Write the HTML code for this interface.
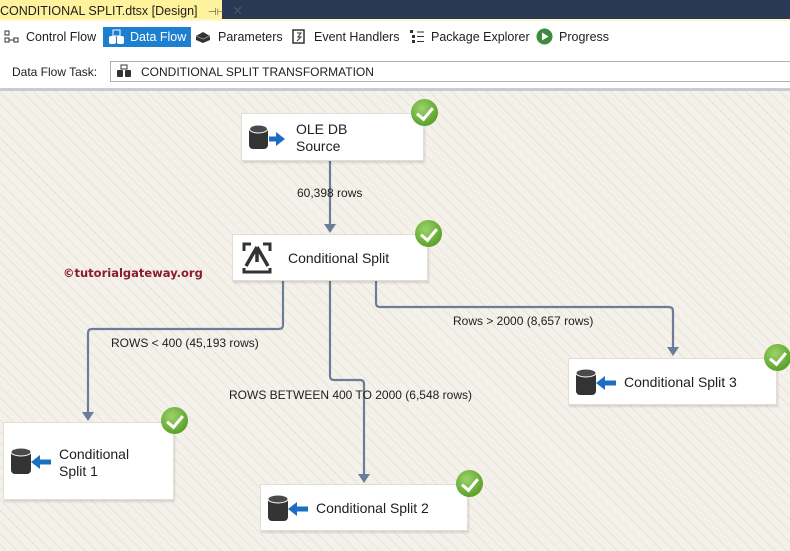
<!DOCTYPE html>
<html><head><meta charset="utf-8">
<style>
*{margin:0;padding:0;box-sizing:border-box}
body{width:790px;height:551px;overflow:hidden;position:relative;font-family:"Liberation Sans",sans-serif;background:#fff}
.tabbar{position:absolute;left:0;top:0;width:790px;height:20px;background:#293955}
.tab{position:absolute;left:0;top:0;width:222px;height:20px;background:#fff29d;font-size:12.5px;color:#1e1e1e;padding:3px 0 0 0;white-space:nowrap}
.tabline{position:absolute;left:0;top:19px;width:790px;height:2px;background:#fff7c4}
.tb{position:absolute;top:30px;font-size:12.5px;color:#1e1e1e;white-space:nowrap}
.sel{position:absolute;left:103px;top:27px;width:88px;height:20px;background:#1c7fd0}
.lbl{position:absolute;left:12px;top:65px;font-size:12px;color:#1e1e1e}
.inp{position:absolute;left:110px;top:61px;width:690px;height:21px;border:1px solid #b0b0b0;background:#fff;font-size:12px;color:#1e1e1e;padding:3px 0 0 30px}
.sep{position:absolute;left:0;top:88px;width:790px;height:3px;background:#c8cbd2}
.canvas{position:absolute;left:0;top:91px;width:790px;height:460px;background:#f3f0e8;
background-image:repeating-linear-gradient(45deg,#f4f1ea 0 4px,#e9e4d8 4px 5px,#f4f1ea 5px 8px)}
.node{position:absolute;background:#fff;border:1px solid #e2ded6;box-shadow:1px 2px 2px rgba(0,0,0,.12);font-size:14px;color:#1e1e1e}
.node .t{position:absolute;line-height:17px}
.chk{position:absolute;width:27px;height:27px;border-radius:50%;background:radial-gradient(circle at 40% 35%,#9dd36a,#5da32d 70%,#4b8c22);}
.chk:after{content:"";position:absolute;left:9px;top:5px;width:7px;height:13px;border:solid #fff;border-width:0 3px 3px 0;transform:rotate(40deg)}
.el{position:absolute;font-size:12px;color:#1e1e1e;white-space:nowrap}
</style></head><body>
<div class="tabbar"></div>
<div class="tab">CONDITIONAL SPLIT.dtsx [Design] &nbsp;&nbsp;<span style="color:#555;font-size:10px">⊣⊢</span>&nbsp;&nbsp;<span style="color:#555">✕</span></div>
<div class="tabline"></div>
<div class="sel"></div>
<svg style="position:absolute;left:4px;top:30px" width="16" height="14"><rect x="1" y="1" width="4" height="4" fill="none" stroke="#333"/><rect x="1" y="8" width="4" height="4" fill="none" stroke="#333"/><rect x="10" y="8" width="4" height="4" fill="none" stroke="#333"/><path d="M5 10h5" stroke="#333"/></svg>
<div class="tb" style="left:26px">Control Flow</div>
<svg style="position:absolute;left:108px;top:29px" width="18" height="16"><rect x="1" y="7" width="7" height="8" rx="2" fill="#fff"/><rect x="9" y="7" width="7" height="8" rx="2" fill="#fff"/><rect x="5" y="1" width="7" height="6" fill="none" stroke="#fff"/></svg>
<div class="tb" style="left:130px;color:#fff">Data Flow</div>
<svg style="position:absolute;left:195px;top:30px" width="16" height="14"><path d="M1 6 L8 2 L15 6 L15 10 L8 13 L1 10Z" fill="#333"/><path d="M1 6 L8 9 L15 6" stroke="#888" fill="none"/></svg>
<div class="tb" style="left:218px">Parameters</div>
<svg style="position:absolute;left:292px;top:29px" width="14" height="15"><rect x="1" y="1" width="11" height="13" fill="none" stroke="#333" stroke-width="1.5"/><path d="M5 4h4l-3 4h3l-4 4" stroke="#333" fill="none"/></svg>
<div class="tb" style="left:314px">Event Handlers</div>
<svg style="position:absolute;left:409px;top:29px" width="16" height="15"><rect x="1" y="1" width="3" height="3" fill="#333"/><rect x="3" y="6" width="3" height="3" fill="#333"/><rect x="3" y="11" width="3" height="3" fill="#333"/><path d="M8 3h7M8 7.5h7M8 12.5h7" stroke="#333"/></svg>
<div class="tb" style="left:431px">Package Explorer</div>
<svg style="position:absolute;left:536px;top:28px" width="17" height="17"><circle cx="8.5" cy="8.5" r="8" fill="#3f8a3f"/><path d="M6 4.5 L12.5 8.5 L6 12.5Z" fill="#fff"/></svg>
<div class="tb" style="left:559px">Progress</div>
<div class="lbl">Data Flow Task:</div>
<div class="inp">CONDITIONAL SPLIT TRANSFORMATION</div>
<svg style="position:absolute;left:116px;top:64px" width="16" height="14"><rect x="1" y="6" width="6" height="7" rx="1" fill="#333"/><rect x="9" y="6" width="6" height="7" rx="1" fill="#333"/><rect x="5" y="1" width="6" height="4" fill="none" stroke="#333"/></svg>
<div class="sep"></div>
<div class="canvas"></div>

<svg style="position:absolute;left:0;top:0" width="790" height="551">
<g stroke="#6b7d98" stroke-width="2.2" fill="none">
<path d="M330 160V226"/>
<path d="M283 281V325q0 4-4 4H92q-4 0-4 4V414"/>
<path d="M330 281V376q0 4 4 4H360q4 0 4 4V476"/>
<path d="M376 281V303q0 4 4 4H669q4 0 4 4V349"/>
</g>
<g fill="#6b7d98">
<path d="M324 224h12l-6 9z"/>
<path d="M82 412h12l-6 9z"/>
<path d="M358 474h12l-6 9z"/>
<path d="M667 347h12l-6 9z"/>
</g>
</svg>
<div class="el" style="left:297px;top:186px">60,398 rows</div>
<div class="el" style="left:111px;top:336px">ROWS &lt; 400 (45,193 rows)</div>
<div class="el" style="left:229px;top:388px">ROWS BETWEEN 400 TO 2000 (6,548 rows)</div>
<div class="el" style="left:453px;top:314px">Rows &gt; 2000 (8,657 rows)</div>
<div style="position:absolute;left:63px;top:266px;font-family:'DejaVu Sans',sans-serif;font-weight:bold;font-size:11.5px;color:#8b1c2c">©tutorialgateway.org</div>

<div class="node" style="left:241px;top:113px;width:183px;height:48px">
<svg style="position:absolute;left:6px;top:10px" width="40" height="28"><rect x="1" y="3" width="19" height="22" rx="4" fill="#333"/><ellipse cx="10.5" cy="5" rx="9" ry="4" fill="#4a4a4a" stroke="#fff"/><path d="M21 15h9" stroke="#1c6fc0" stroke-width="5"/><path d="M28 8l9 7-9 7z" fill="#1c6fc0"/></svg>
<div class="t" style="left:54px;top:7px">OLE DB<br>Source</div>
</div>
<div class="chk" style="left:411px;top:99px"></div>

<div class="node" style="left:232px;top:234px;width:196px;height:47px">
<svg style="position:absolute;left:8px;top:6px" width="32" height="34"><path d="M3 10V3h7M29 10V3h-7M3 27v4h26v-4" stroke="#333" stroke-width="3" fill="none"/><path d="M16 6L5 25M16 6l11 19M16 6v15" stroke="#333" stroke-width="3.5" fill="none"/></svg>
<div class="t" style="left:55px;top:15px">Conditional Split</div>
</div>
<div class="chk" style="left:415px;top:220px"></div>

<div class="node" style="left:3px;top:422px;width:171px;height:78px">
<svg style="position:absolute;left:6px;top:24px" width="42" height="30"><rect x="1" y="3" width="20" height="24" rx="4" fill="#333"/><ellipse cx="11" cy="5" rx="10" ry="4" fill="#4a4a4a" stroke="#fff"/><path d="M27 15h14" stroke="#1c6fc0" stroke-width="5"/><path d="M30 8l-9 7 9 7z" fill="#1c6fc0"/></svg>
<div class="t" style="left:55px;top:23px">Conditional<br>Split 1</div>
</div>
<div class="chk" style="left:161px;top:407px"></div>

<div class="node" style="left:260px;top:484px;width:208px;height:47px">
<svg style="position:absolute;left:6px;top:9px" width="42" height="30"><rect x="1" y="3" width="20" height="24" rx="4" fill="#333"/><ellipse cx="11" cy="5" rx="10" ry="4" fill="#4a4a4a" stroke="#fff"/><path d="M27 15h14" stroke="#1c6fc0" stroke-width="5"/><path d="M30 8l-9 7 9 7z" fill="#1c6fc0"/></svg>
<div class="t" style="left:55px;top:15px">Conditional Split 2</div>
</div>
<div class="chk" style="left:456px;top:470px"></div>

<div class="node" style="left:568px;top:358px;width:209px;height:47px">
<svg style="position:absolute;left:6px;top:9px" width="42" height="30"><rect x="1" y="3" width="20" height="24" rx="4" fill="#333"/><ellipse cx="11" cy="5" rx="10" ry="4" fill="#4a4a4a" stroke="#fff"/><path d="M27 15h14" stroke="#1c6fc0" stroke-width="5"/><path d="M30 8l-9 7 9 7z" fill="#1c6fc0"/></svg>
<div class="t" style="left:55px;top:15px">Conditional Split 3</div>
</div>
<div class="chk" style="left:764px;top:344px"></div>
</body></html>
